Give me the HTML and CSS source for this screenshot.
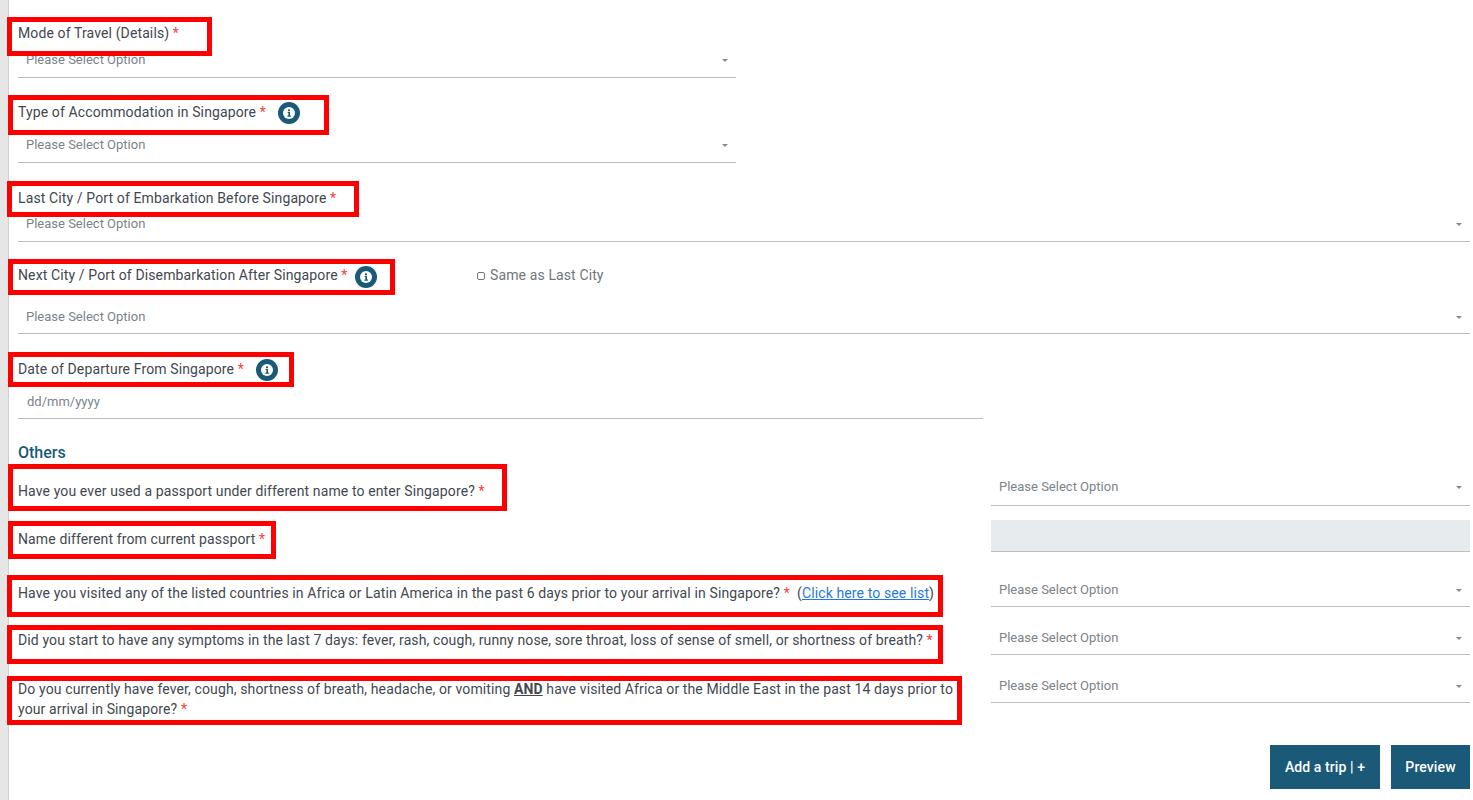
FILE: index.html
```html
<!DOCTYPE html>
<html lang="en">
<head>
<meta charset="utf-8">
<title>Trip details</title>
<link rel="stylesheet" href="styles.css">
</head>
<body>
<div class="app">
  <div class="gutter"></div>
  <main class="main">
    <svg class="icon-defs" width="0" height="0" aria-hidden="true">
      <symbol id="info" viewBox="0 0 22 22">
        <circle cx="11" cy="11" r="11" fill="#1a5a78"/>
        <circle cx="11" cy="11" r="6" fill="#fff"/>
        <rect x="10" y="7.4" width="2" height="1.8" fill="#1a5a78"/>
        <path d="M9.600 10h2.400v3.600h.9v1.100H9.400v-1.100h1V11H9.600z" fill="#1a5a78"/>
      </symbol>
    </svg>

    <section class="field field-sm">
      <div class="label">Mode of Travel (Details) <span class="req">*</span></div>
      <div class="select"><span>Please Select Option</span><i class="caret"></i></div>
    </section>

    <section class="field field-sm">
      <div class="label label-gap">Type of Accommodation in Singapore <span class="req">*</span>
        <svg class="info info-wide"><use href="#info"/></svg></div>
      <div class="select"><span>Please Select Option</span><i class="caret"></i></div>
    </section>

    <section class="field">
      <div class="label label-low">Last City / Port of Embarkation Before Singapore <span class="req">*</span></div>
      <div class="select"><span>Please Select Option</span><i class="caret"></i></div>
    </section>

    <section class="field">
      <div class="label label-gap-lg label-high">
        <div class="label-next">Next City / Port of Disembarkation After Singapore <span class="req">*</span>
          <svg class="info"><use href="#info"/></svg></div>
        <label class="same"><span class="check"></span>Same as Last City</label>
      </div>
      <div class="select select-low"><span>Please Select Option</span><i class="caret"></i></div>
    </section>

    <section class="field field-md">
      <div class="label label-gap label-low">Date of Departure From Singapore <span class="req">*</span>
        <svg class="info info-wide"><use href="#info"/></svg></div>
      <div class="select select-date select-low"><span>dd/mm/yyyy</span></div>
    </section>

    <h2 class="heading">Others</h2>

    <div class="row">
      <div class="q q-9">Have you ever used a passport under different name to enter Singapore? <span class="req">*</span></div>
      <div class="select select-high"><span>Please Select Option</span><i class="caret"></i></div>
    </div>
    <div class="row row-disabled">
      <div class="q q-9">Name different from current passport <span class="req">*</span></div>
      <div class="disabled"></div>
    </div>
    <div class="row">
      <div class="q q-10">Have you visited any of the listed countries in Africa or Latin America in the past 6 days prior to your arrival in Singapore? <span class="req">*</span>&nbsp; (<a href="#">Click here to see list</a>)</div>
      <div class="select select-low"><span>Please Select Option</span><i class="caret"></i></div>
    </div>
    <div class="row">
      <div class="q q-9">Did you start to have any symptoms in the last 7 days: fever, rash, cough, runny nose, sore throat, loss of sense of smell, or shortness of breath? <span class="req">*</span></div>
      <div class="select select-low"><span>Please Select Option</span><i class="caret"></i></div>
    </div>
    <div class="row">
      <div class="q q-10">
        <div class="line">Do you currently have fever, cough, shortness of breath, headache, or vomiting <b class="and">AND</b> have visited Africa or the Middle East in the past 14 days prior to</div>
        <div class="line">your arrival in Singapore? <span class="req">*</span></div>
      </div>
      <div class="select select-low"><span>Please Select Option</span><i class="caret"></i></div>
    </div>

    <div class="actions">
      <button class="btn btn-add">Add a trip | +</button>
      <button class="btn btn-preview">Preview</button>
    </div>

    <div class="mark mark-1"></div>
    <div class="mark mark-2"></div>
    <div class="mark mark-3"></div>
    <div class="mark mark-4"></div>
    <div class="mark mark-5"></div>
    <div class="mark mark-6"></div>
    <div class="mark mark-7"></div>
    <div class="mark mark-8"></div>
    <div class="mark mark-9"></div>
    <div class="mark mark-10"></div>
  </main>
</div>
</body>
</html>
```
FILE: styles.css
```css
* { box-sizing: border-box; }
html, body { margin: 0; height: 100%; background: #fff; }
body { font-family: Roboto, "Liberation Sans", sans-serif; font-size: 14px; letter-spacing: .12px; color: #42484e; overflow: hidden; }
.app { display: flex; min-height: 800px; }
.gutter { width: 9px; flex: none; background: #e6e6e6; border-right: 1px solid #d2d2d2; }
.main { flex: 1; position: relative; padding: 23px 3px 0 9px; }
.icon-defs { position: absolute; }

.field { margin-bottom: 24px; }
.field-sm { width: 718px; }
.field-md { width: 965px; margin-bottom: 0; }
.label { display: flex; align-items: center; height: 21px; line-height: 21px; white-space: pre-wrap; }
.label-gap { margin-bottom: 6px; }
.label-gap-lg { margin-bottom: 13px; }
.label-low { padding-top: 2px; }
.label-high { padding-bottom: 2px; }
.label-next { width: 459px; flex: none; display: flex; align-items: center; white-space: pre-wrap; }
.label-next .info { margin: 3px 0 0 8px; }
.same { display: flex; align-items: center; color: #6f767c; }
.check { width: 8px; height: 8px; margin-right: 5px; border: 1px solid #767676; border-radius: 2px; background: #fff; }
.req { color: #ff3b3b; }
.info { width: 22px; height: 22px; margin: 1px 0 0 7px; flex: none; }
.info-wide { margin-left: 12px; }

.select { display: flex; align-items: center; justify-content: space-between; height: 34px; padding: 0 8px 2px 8px; border-bottom: 1px solid #bdbdbd; color: #7c8389; font-size: 13px; letter-spacing: 0; }
.select-date { padding-left: 9px; }
.select-high { padding-bottom: 4px; }
.select-low { padding-bottom: 0; }
.caret { width: 0; height: 0; border-left: 3.5px solid transparent; border-right: 3.5px solid transparent; border-top: 3.5px solid #8a8a8a; margin-top: 2px; }

.heading { margin: 23px 0 9px; height: 21px; font-size: 16px; line-height: 21px; font-weight: 500; letter-spacing: 0; color: #1a5a78; }
.row { display: flex; margin-bottom: 14px; }
.row-disabled { margin-bottom: 21px; }
.q { width: 973px; flex: none; line-height: 20px; padding-right: 15px; }
.q-10 { padding-top: 10px; }
.q-9 { padding-top: 9px; }
.row .select { flex: 1; }
.disabled { flex: 1; height: 32px; background: #e8ebee; border-bottom: 1px solid #bdbdbd; }
.and { font-weight: 700; text-decoration: underline; }
a { color: #1f7ae0; }

.actions { display: flex; justify-content: flex-end; gap: 11px; margin-top: 26px; }
.btn { height: 44px; border: 0; background: #1a5a78; color: #fff; font: 500 14px Roboto, "Liberation Sans", sans-serif; letter-spacing: .1px; padding: 0; }
.btn-add { width: 110px; }
.btn-preview { width: 79px; }

.mark { position: absolute; border: 5px solid #fe0000; pointer-events: none; }
.mark-1 { left: -2px; top: 17px; width: 205px; height: 39px; }
.mark-2 { left: -1px; top: 95px; width: 321px; height: 40px; }
.mark-3 { left: -2px; top: 181px; width: 352px; height: 36px; }
.mark-4 { left: -1px; top: 259px; width: 387px; height: 36px; }
.mark-5 { left: -1px; top: 352px; width: 286px; height: 35px; }
.mark-6 { left: -1px; top: 464px; width: 499px; height: 47px; }
.mark-7 { left: -1px; top: 521px; width: 268px; height: 38px; }
.mark-8 { left: -2px; top: 575px; width: 936px; height: 42px; }
.mark-9 { left: -2px; top: 625px; width: 936px; height: 39px; }
.mark-10 { left: -2px; top: 676px; width: 955px; height: 49px; }
```
